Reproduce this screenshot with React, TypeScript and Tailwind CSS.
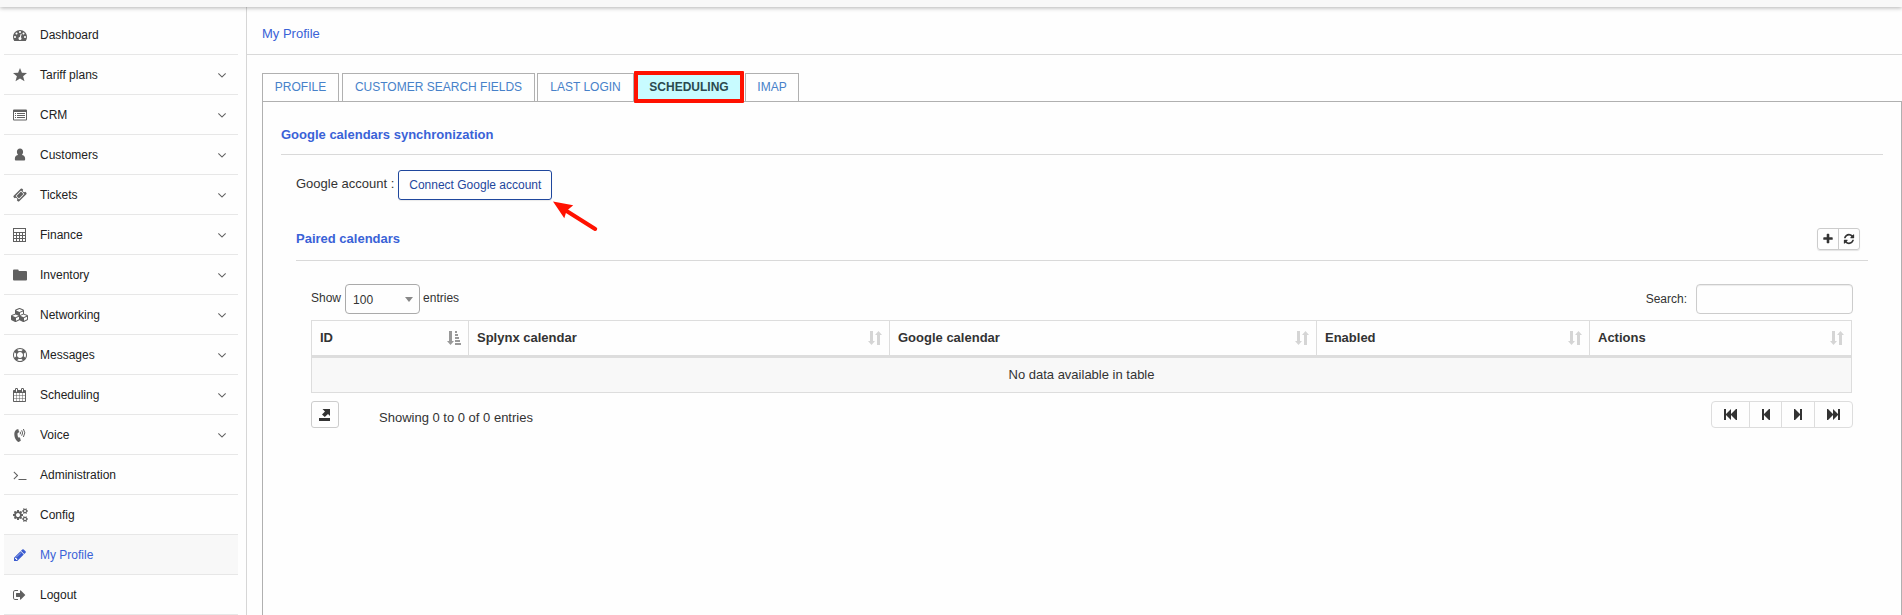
import React from 'react';

type IconDef = { path: string; box?: string };

const P: Record<string, IconDef> = {
  dashboard: { path: 'M384 1152q0-53-37.5-90.5t-90.5-37.5-90.5 37.5-37.5 90.5 37.5 90.5 90.5 37.5 90.5-37.5 37.5-90.5zm192-448q0-53-37.5-90.5t-90.5-37.5-90.5 37.5-37.5 90.5 37.5 90.5 90.5 37.5 90.5-37.5 37.5-90.5zm428 481l101-382q6-26-7.5-48.5t-38.5-29.5-48 6.5-30 39.5l-101 382q-60 5-107 43.5t-63 98.5q-20 77 20 146t117 89 146-20 89-117q16-60-6-117t-72-91zm660-33q0-53-37.5-90.5t-90.5-37.5-90.5 37.5-37.5 90.5 37.5 90.5 90.5 37.5 90.5-37.5 37.5-90.5zm-640-640q0-53-37.5-90.5t-90.5-37.5-90.5 37.5-37.5 90.5 37.5 90.5 90.5 37.5 90.5-37.5 37.5-90.5zm448 192q0-53-37.5-90.5t-90.5-37.5-90.5 37.5-37.5 90.5 37.5 90.5 90.5 37.5 90.5-37.5 37.5-90.5zm320 448q0 261-141 483-19 29-54 29h-1402q-35 0-54-29-141-221-141-483 0-182 71-348t191-286 286-191 348-71 348 71 286 191 191 286 71 348z' },
  star: { path: 'M7 0 8.900 4.700 14 5 10.100 8.200 11.500 13.200 7 10.400 2.500 13.200 3.900 8.200 0 5 5.100 4.700z', box: '0 0 14 14' },
  crm: { path: 'M1 1.500h12a1 1 0 0 1 1 1v9a1 1 0 0 1-1 1H1a1 1 0 0 1-1-1v-9a1 1 0 0 1 1-1zM1 4v7.500h12V4zM2 5h1v1H2zM4 5h8v1H4zM2 7h1v1H2zM4 7h8v1H4zM2 9h1v1H2zM4 9h8v1H4z', box: '0 0 14 14' },
  user: { path: 'M7 .5c1.900 0 3.100 1.400 3.100 3.300 0 1.300-.5 2.400-1.200 3.100 1.700.2 3.200 1.300 3.200 3.300v1.600c0 .5-.3.7-.8.7H2.700c-.5 0-.8-.2-.8-.7v-1.600c0-2 1.500-3.100 3.200-3.300C4.400 6.200 3.900 5.100 3.900 3.800 3.900 1.900 5.100.5 7 .5z', box: '0 0 14 14' },
  ticket: { path: 'M1024 452l316 316-572 572-316-316zm-211 979l618-618q19-19 19-45t-19-45l-362-362q-18-18-45-18t-45 18l-618 618q-19 19-19 45t19 45l362 362q18 18 45 18t45-18zm889-637l-907 908q-37 37-90.5 37t-90.500-37l-126-125q56-56 56-136t-56-136-136-56-136 56l-125-126q-37-37-37-90.500t37-90.500l907-906q37-37 90.500-37t90.500 37l125 125q-56 56-56 136t56 136 136 56 136-56l126 125q37 37 37 90.500t-37 90.500z' },
  calculator: { path: 'M0 0h13v14H0zM1 1v3h11V1zM1 5v2h2V5zM4 5v2h2V5zM7 5v2h2V5zM10 5v2h2V5zM1 8v2h2V8zM4 8v2h2V8zM7 8v2h2V8zM10 8v2h2V8zM1 11v2h2v-2zM4 11v2h2v-2zM7 11v2h2v-2zM10 11v2h2v-2z', box: '0 0 14 14' },
  folder: { path: 'M0 2.500a1 1 0 0 1 1-1h3.700a1 1 0 0 1 1 1v.5H13a1 1 0 0 1 1 1v7.500a1 1 0 0 1-1 1H1a1 1 0 0 1-1-1z', box: '0 0 14 14' },
  cubes: { path: 'M640 1632l384-192v-314l-384 164v342zm-64-454l404-173-404-173-404 173zm1088 454l384-192v-314l-384 164v342zm-64-454l404-173-404-173-404 173zm-448-293l384-165v-266l-384 164v267zm-64-379l441-189-441-189-441 189zm1088 518v416q0 36-19 67t-52 47l-448 224q-25 14-57 14t-57-14l-448-224q-4-2-7-4-2 2-7 4l-448 224q-25 14-57 14t-57-14l-448-224q-33-16-52-47t-19-67v-416q0-38 21.5-70t56.5-48l434-186v-400q0-38 21.5-70t56.5-48l448-192q23-10 50-10t50 10l448 192q35 16 56.5 48t21.5 70v400l434 186q36 16 57 48t21 70z', box: '0 0 2304 1792' },
  ring: { path: 'M896 0q182 0 348 71t286 191 191 286 71 348-71 348-191 286-286 191-348 71-348-71-286-191-191-286-71-348 71-348 191-286 286-191 348-71zm0 128q-190 0-361 90l194 194q82-28 167-28t167 28l194-194q-171-90-361-90zm-678 1129l194-194q-28-82-28-167t28-167l-194-194q-90 171-90 361t90 361zm678 407q190 0 361-90l-194-194q-82 28-167 28t-167-28l-194 194q171 90 361 90zm0-384q159 0 271.5-112.5t112.5-271.5-112.5-271.5-271.5-112.5-271.5 112.5-112.5 271.5 112.5 271.5 271.5 112.5zm484-217l194 194q90-171 90-361t-90-361l-194 194q28 82 28 167t-28 167z' },
  calendar: { path: 'M192 1664h288v-288h-288v288zm352 0h320v-288h-320v288zm-352-352h288v-320h-288v320zm352 0h320v-320h-320v320zm-352-384h288v-288h-288v288zm736 736h320v-288h-320v288zm-384-736h320v-288h-320v288zm768 736h288v-288h-288v288zm-384-352h320v-320h-320v320zm-352-864v-288q0-13-9.5-22.5t-22.5-9.5h-64q-13 0-22.5 9.5t-9.5 22.5v288q0 13 9.5 22.5t22.5 9.5h64q13 0 22.5-9.5t9.5-22.5zm736 864h288v-320h-288v320zm-384-384h320v-288h-320v288zm384 0h288v-288h-288v288zm32-480v-288q0-13-9.5-22.5t-22.5-9.5h-64q-13 0-22.5 9.5t-9.5 22.5v288q0 13 9.5 22.5t22.5 9.5h64q13 0 22.5-9.5t9.5-22.5zm384-64v1280q0 52-38 90t-90 38h-1408q-52 0-90-38t-38-90v-1280q0-52 38-90t90-38h128v-96q0-66 47-113t113-47h64q66 0 113 47t47 113v96h384v-96q0-66 47-113t113-47h64q66 0 113 47t47 113v96h128q52 0 90 38t38 90z', box: '64 0 1792 1792' },
  terminal: { path: 'M649 983l-466 466q-10 10-23 10t-23-10l-50-50q-10-10-10-23t10-23l393-393-393-393q-10-10-10-23t10-23l50-50q10-10 23-10t23 10l466 466q10 10 10 23t-10 23zm1079 457v64q0 14-9 23t-23 9h-960q-14 0-23-9t-9-23v-64q0-14 9-23t23-9h960q14 0 23 9t9 23z' },
  cogs: { path: 'M896 896q0-106-75-181t-181-75-181 75-75 181 75 181 181 75 181-75 75-181zm768 512q0-52-38-90t-90-38-90 38-38 90q0 53 37.5 90.5t90.5 37.5 90.5-37.5 37.5-90.5zm0-1024q0-52-38-90t-90-38-90 38-38 90q0 53 37.5 90.5t90.5 37.5 90.5-37.5 37.5-90.5zm-384 421v185q0 10-7 19.5t-16 10.5l-155 24q-11 35-32 76 34 48 90 115 7 11 7 20 0 12-7 19-23 30-82.5 89.5t-78.5 59.5q-11 0-21-7l-115-90q-37 19-77 31-11 108-23 155-7 24-30 24h-186q-11 0-20-7.5t-10-17.5l-23-153q-34-10-75-31l-118 89q-7 7-20 7-11 0-21-8-144-133-144-160 0-9 7-19 10-14 41-53t47-61q-23-44-35-82l-152-24q-10-1-17-9.5t-7-19.5v-185q0-10 7-19.5t16-10.5l155-24q11-35 32-76-34-48-90-115-7-11-7-20 0-12 7-20 22-30 82-89t79-59q11 0 21 7l115 90q34-18 77-32 11-108 23-154 7-24 30-24h186q11 0 20 7.5t10 17.5l23 153q34 10 75 31l118-89q8-7 20-7 11 0 21 8 144 133 144 160 0 8-7 19-12 16-42 54t-45 60q23 48 34 82l152 23q10 2 17 10.5t7 19.5zm640 533v140q0 16-149 31-12 27-30 52 51 113 51 138 0 4-4 7-122 71-124 71-8 0-46-47t-52-68q-20 2-30 2t-30-2q-14 21-52 68t-46 47q-2 0-124-71-4-3-4-7 0-25 51-138-18-25-30-52-149-15-149-31v-140q0-16 149-31 13-29 30-52-51-113-51-138 0-4 4-7 4-2 35-20t59-34 30-16q8 0 46 46.5t52 67.5q20-2 30-2t30 2q51-71 92-112l6-2q4 0 124 70 4 3 4 7 0 25-51 138 17 23 30 52 149 15 149 31zm0-1024v140q0 16-149 31-12 27-30 52 51 113 51 138 0 4-4 7-122 71-124 71-8 0-46-47t-52-68q-20 2-30 2t-30-2q-14 21-52 68t-46 47q-2 0-124-71-4-3-4-7 0-25 51-138-18-25-30-52-149-15-149-31v-140q0-16 149-31 13-29 30-52-51-113-51-138 0-4 4-7 4-2 35-20t59-34 30-16q8 0 46 46.5t52 67.5q20-2 30-2t30 2q51-71 92-112l6-2q4 0 124 70 4 3 4 7 0 25-51 138 17 23 30 52 149 15 149 31z', box: '0 0 1920 1792' },
  pencil: { path: 'M491 1536l91-91-235-235-91 91v107h128v128h107zm523-928q0-22-22-22-10 0-17 7l-542 542q-7 7-7 17 0 22 22 22 10 0 17-7l542-542q7-7 7-17zm-54-192l416 416-832 832h-416v-416zm683 96q0 53-37 90l-166 166-416-416 166-165q36-38 90-38 53 0 91 38l235 234q37 39 37 91z' },
  logout: { path: 'M640 1440q0 4 1 20t.5 26.5-3 23.5-10 19.5-20.5 6.5h-320q-119 0-203.5-84.5t-84.5-203.5v-704q0-119 84.5-203.5t203.5-84.5h320q13 0 22.5 9.5t9.5 22.5q0 4 1 20t.5 26.5-3 23.5-10 19.5-20.5 6.5h-320q-66 0-113 47t-47 113v704q0 66 47 113t113 47h312l11.5 1 11.5 3 8 5.5 7 9 2 13.5zm928-544q0 26-19 45l-544 544q-19 19-45 19t-45-19-19-45v-288h-448q-26 0-45-19t-19-45v-384q0-26 19-45t45-19h448v-288q0-26 19-45t45-19 45 19l544 544q19 19 19 45z' },
  angle: { path: 'M1395 736q0 13-10 23l-466 466q-10 10-23 10t-23-10l-466-466q-10-10-10-23t10-23l50-50q10-10 23-10t23 10l393 393 393-393q10-10 23-10t23 10l50 50q10 10 10 23z' },
  plus: { path: 'M1600 736v192q0 40-28 68t-68 28h-416v416q0 40-28 68t-68 28h-192q-40 0-68-28t-28-68v-416h-416q-40 0-68-28t-28-68v-192q0-40 28-68t68-28h416v-416q0-40 28-68t68-28h192q40 0 68 28t28 68v416h416q40 0 68 28t28 68z' },
  refresh: { path: 'M1639 1056q0 5-1 7-64 268-268 434.5t-478 166.5q-146 0-282.5-55t-243.5-157l-129 129q-19 19-45 19t-45-19-19-45v-448q0-26 19-45t45-19h448q26 0 45 19t19 45-19 45l-137 137q71 66 161 102t187 36q134 0 250-65t186-179q11-17 53-117 8-23 30-23h192q13 0 22.5 9.5t9.5 22.5zm25-800v448q0 26-19 45t-45 19h-448q-26 0-45-19t-19-45 19-45l138-138q-148-137-349-137-134 0-250 65t-186 179q-11 17-53 117-8 23-30 23h-199q-13 0-22.5-9.5t-9.5-22.5v-7q65-268 270-434.5t480-166.5q146 0 284 55.5t245 156.5l130-129q19-19 45-19t45 19 19 45z' },
  export: { path: 'M3.500 0h7.500v7L9 5 5.800 8 3 5.500 6 2.500zM0 9h11v3H0z', box: '0 0 11 12' },
};

function Icon({ name, className }: { name: string; className?: string }) {
  const i = P[name];
  return (
    <svg viewBox={i.box ?? '0 0 1792 1792'} className={className} fill="currentColor" fillRule="evenodd">
      <path d={i.path} />
    </svg>
  );
}

function PhoneIcon() {
  return (
    <svg viewBox="0 0 14 14" className="h-3.5 w-3.5" fill="none" stroke="currentColor">
      <path d="M3.200 1.800 5.200 1 6.200 4.200 4.700 5C4.300 6.500 4.600 8.200 5.400 9.500L7 9.400 7.800 12.700 5.700 14C2.300 13.500-.8 5 3.200 1.800z" fill="currentColor" stroke="none" />
      <path d="M7.100 3.700q.9 1.200 0 2.600M8.700 2.300q1.800 2.600 0 5.400M10.400 1q2.800 3.700 0 8" strokeWidth="1" />
    </svg>
  );
}

const items: { label: string; icon: string; sub?: boolean; active?: boolean }[] = [
  { label: 'Dashboard', icon: 'dashboard' },
  { label: 'Tariff plans', icon: 'star', sub: true },
  { label: 'CRM', icon: 'crm', sub: true },
  { label: 'Customers', icon: 'user', sub: true },
  { label: 'Tickets', icon: 'ticket', sub: true },
  { label: 'Finance', icon: 'calculator', sub: true },
  { label: 'Inventory', icon: 'folder', sub: true },
  { label: 'Networking', icon: 'cubes', sub: true },
  { label: 'Messages', icon: 'ring', sub: true },
  { label: 'Scheduling', icon: 'calendar', sub: true },
  { label: 'Voice', icon: 'phone', sub: true },
  { label: 'Administration', icon: 'terminal' },
  { label: 'Config', icon: 'cogs' },
  { label: 'My Profile', icon: 'pencil', active: true },
  { label: 'Logout', icon: 'logout' },
];

function Sidebar() {
  return (
    <nav className="w-[247px] shrink-0 border-r border-[#d6d6d6] pl-1 pr-2 pt-2">
      {items.map((it) => (
        <a
          key={it.label}
          className={`flex h-10 items-center border-b border-[#e7e7e7] pr-[9px] text-[12px] ${it.active ? 'bg-[#f8f8f8] text-[#3a62d7]' : 'text-[#222]'}`}
        >
          <span className={`flex w-8 shrink-0 justify-center pt-px ${it.active ? 'text-[#3a5bd0]' : 'text-[#606060]'}`}>
            {it.icon === 'phone' ? <PhoneIcon /> : (
              <Icon name={it.icon} className={it.icon === 'cubes' ? 'h-3.5 w-[18px] -ml-px' : it.icon === 'cogs' ? 'h-3.5 w-[15px]' : 'h-3.5 w-3.5'} />
            )}
          </span>
          <span className="ml-1 grow">{it.label}</span>
          {it.sub && <Icon name="angle" className="h-[14px] w-[14px] text-[#606060]" />}
        </a>
      ))}
    </nav>
  );
}

function SortIcon({ active }: { active?: boolean }) {
  return active ? (
    <svg viewBox="0 0 14 14" className="h-3.5 w-3.5" fill="#999">
      <path d="M2 0h3v10h2L3.500 14 0 10h2zM8 0h2v2H8zM8 3h3v2H8zM8 6h4v2H8zM8 9h5v2H8zM8 12h6v2H8z" />
    </svg>
  ) : (
    <svg viewBox="0 0 14 14" className="h-3.5 w-3.5" fill="#d5d5d5">
      <path d="M2 0h3v10h2L3.500 14 0 10h2zM9 14h3V4h2L10.500 0 7 4h2z" />
    </svg>
  );
}

const cols = ['ID', 'Splynx calendar', 'Google calendar', 'Enabled', 'Actions'];

const pagers = [
  { w: 'w-[38px]', d: 'M0 0h2v5l5-5v5l5-5h1v11h-1L7 6v5L2 6v5H0z', n: 13 },
  { w: 'w-8', d: 'M0 0h2v5l5-5h1v11H7L2 6v5H0z', n: 8 },
  { w: 'w-[33px]', d: 'M8 0H6v5L1 0H0v11h1l5-5v5h2z', n: 8 },
  { w: 'w-[37px]', d: 'M13 0h-2v5L6 0v5L1 0H0v11h1l5-5v5l5-5v5h2z', n: 13 },
];

function Tabs() {
  const tab = 'flex h-[28px] items-center border border-b-0 border-[#b0b0b0] pb-[2px] text-[12px] text-[#4781c9] justify-center whitespace-nowrap';
  return (
    <div className="flex h-[28px]">
      <a className={`${tab} w-[77px]`}>PROFILE</a>
      <a className={`${tab} ml-[3px] w-[193px]`}>CUSTOMER SEARCH FIELDS</a>
      <a className={`${tab} ml-[2px] w-[97px]`}>LAST LOGIN</a>
      <a className="relative z-10 -mt-[2px] flex h-[32px] w-[110px] shrink-0 items-center justify-center rounded-[1px] border-4 border-[#f10] bg-[#c8fbff] pb-px text-[12px] font-bold text-[#2c4a4f]">SCHEDULING</a>
      <a className={`${tab} ml-px w-[54px]`}>IMAP</a>
    </div>
  );
}

export default function App() {
  return (
    <div className="flex h-[615px] w-[1902px] flex-col overflow-hidden bg-[#fefefe] font-['Liberation_Sans',Arial,sans-serif] text-[13px] text-[#333]">
      <header className="z-10 h-[7px] shrink-0 bg-[#f8f8f8] shadow-[0_1px_4px_rgba(0,0,0,0.3)]" />
      <div className="flex min-h-0 grow">
        <Sidebar />
        <main className="flex min-w-0 grow flex-col">
          <div className="flex h-12 shrink-0 items-center border-b border-[#d9d9d9] pl-[15px] pt-[7px] text-[#3a62d7]">My Profile</div>
          <div className="flex grow flex-col pl-[15px] pt-[18px]">
            <Tabs />
            <section className="grow border border-b-0 border-[#b0b0b0] pl-[18px] pr-[18px]">
              <h2 className="flex h-[53px] items-center border-b border-[#d9d9d9] pt-[14px] font-bold text-[#3a62d7]">Google calendars synchronization</h2>
              <div className="px-[15px]">
                <div className="flex pt-[15px]">
                  <span className="pt-[4px]">Google account :</span>
                  <div className="relative ml-1">
                    <button className="block h-[30px] w-[154px] rounded-[3px] border border-[#1f479d] text-[12px] text-[#1f479d] shadow-[0_1px_1px_rgba(0,0,0,0.08)]">Connect Google account</button>
                    <svg className="absolute left-[154px] top-[30px] h-[34px] w-12" viewBox="0 0 48 34">
                      <path d="M13 10 43.200 29" stroke="#f10" strokeWidth="4" strokeLinecap="round" />
                      <path d="M1 1.500 21.200 5.300 14.500 11 12.300 18.300z" fill="#f10" />
                    </svg>
                  </div>
                </div>
                <div className="mt-[20px] flex h-[41px] items-start justify-between border-b border-[#d9d9d9] pr-2">
                  <h3 className="pt-[9px] font-bold text-[#3a62d7]">Paired calendars</h3>
                  <div className="mt-[8px] flex h-[22px] w-[43px] rounded-[3px] border border-[#ccc] text-[#333] shadow-[0_1px_1px_rgba(0,0,0,0.1)]">
                    <span className="flex w-[21px] items-center justify-center border-r border-[#ccc]"><Icon name="plus" className="h-3 w-3" /></span>
                    <span className="flex w-5 items-center justify-center"><Icon name="refresh" className="h-3 w-3" /></span>
                  </div>
                </div>
                <div className="px-[15px]">
                  <div className="flex items-start pt-[23px] text-[12px]">
                    <span className="pt-[5px]">Show</span>
                    <div className="ml-1 flex h-[30px] w-[75px] items-center justify-between rounded-[4px] border border-[#aaa] pl-[7px] pr-[6px] pt-[2px]">
                      100
                      <svg className="-mt-px h-[5px] w-2" viewBox="0 0 8 5"><path d="M0 0h8L4 5z" fill="#888" /></svg>
                    </div>
                    <span className="ml-[3px] pt-[5px]">entries</span>
                    <span className="ml-auto pt-[6px]">Search:</span>
                    <input className="ml-[9px] h-[30px] w-[157px] rounded-[4px] border border-[#ccc] shadow-[inset_0_1px_1px_rgba(0,0,0,0.075)]" />
                  </div>
                  <div className="mr-px mt-[6px] border border-[#ddd]">
                    <div className="grid h-[37px] grid-cols-[157px_421px_427px_273px_1fr] border-b-[3px] border-[#ddd]">
                      {cols.map((c, i) => (
                        <div key={c} className={`flex items-center justify-between pl-2 pr-[7px] font-bold ${i < 4 ? 'border-r border-[#ddd]' : ''}`}>
                          {c}
                          <SortIcon active={i === 0} />
                        </div>
                      ))}
                    </div>
                    <div className="flex h-[34px] items-center justify-center bg-[#f8f8f8]">No data available in table</div>
                  </div>
                  <div className="flex items-start pt-2">
                    <button className="flex h-[27px] w-[28px] -mr-[2px] items-center justify-center rounded-[3px] border border-[#ccc] pr-px"><Icon name="export" className="h-3 w-[11px]" /></button>
                    <span className="ml-[42px] pt-[7px]">Showing 0 to 0 of 0 entries</span>
                    <div className="ml-auto flex h-[27px] rounded-[4px] border border-[#ddd]">
                      {pagers.map((p, i) => (
                        <span key={i} className={`flex items-center justify-center ${p.w} ${i < 3 ? 'border-r border-[#ddd]' : ''}`}>
                          <svg width={p.n} height="11" viewBox={`0 0 ${p.n} 11`} fill="#333"><path d={p.d} /></svg>
                        </span>
                      ))}
                    </div>
                  </div>
                </div>
              </div>
            </section>
          </div>
        </main>
      </div>
    </div>
  );
}
